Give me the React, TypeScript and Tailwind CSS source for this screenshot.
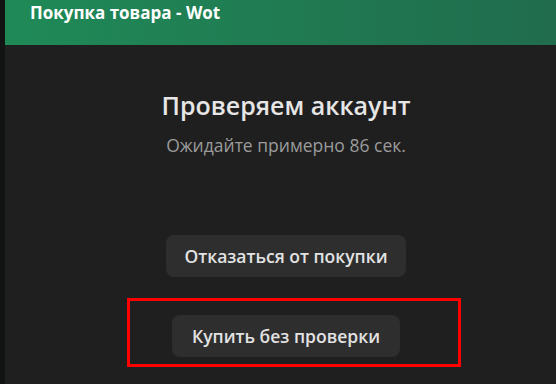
/* Purchase check modal */

function App() {
  return (
    <div
      className="flex h-[384px] w-[556px] overflow-hidden bg-[#121212]"
      style={{ fontFamily: '"Open Sans", "Noto Sans", sans-serif' }}
    >
      {/* Left edge of the page behind the modal */}
      <div className="w-[5px] shrink-0 bg-[#121313]" />

      {/* Modal */}
      <div className="flex flex-1 flex-col bg-[#1f1f1f]">
        {/* Header */}
        <header className="h-[45px] shrink-0 bg-gradient-to-r from-[#1f8a57] to-[#206c4d] pl-[25px] pt-[1px]">
          <h1 className="text-[17px] font-bold leading-[24px] text-white">
            Покупка товара - Wot
          </h1>
        </header>

        {/* Body */}
        <main className="relative flex flex-1 flex-col items-center pl-[11px] pt-[43px]">
          <h2 className="text-[25px] font-semibold leading-[34px] text-[#e6e6e6]">
            Проверяем аккаунт
          </h2>
          <p className="mt-[11px] text-[17.5px] leading-[24px] text-[#9b9b9b]">
            Ожидайте примерно 86 сек.
          </p>

          <button className="mt-[78px] h-[42px] rounded-lg bg-[#2e2e2e] px-[18px] text-[17.5px] font-semibold text-[#e2e2e2]">
            Отказаться от покупки
          </button>

          <div className="relative mt-[38px]">
            <button className="h-[42px] rounded-lg bg-[#2e2e2e] px-[20px] text-[17.5px] font-semibold text-[#e2e2e2]">
              Купить без проверки
            </button>
            {/* Red highlight annotation */}
            <div className="pointer-events-none absolute -left-[45px] -right-[61px] -top-[17px] -bottom-[10px] border-[3px] border-[#ff0000]" />
          </div>
        </main>
      </div>
    </div>
  );
}

export default App;
